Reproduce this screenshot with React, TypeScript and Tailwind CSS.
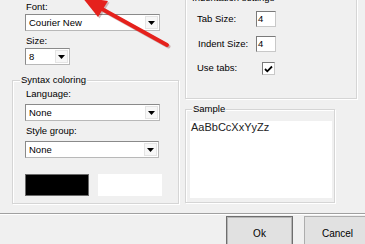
import React from "react";

function Combo({ value, w }: { value: string; w: string }) {
  return (
    <div className={`${w} h-[17px] flex items-stretch bg-white border border-t-[#8a8a8a] border-l-[#8a8a8a] border-r-[#b8b8b8] border-b-[#b8b8b8]`}>
      <div className="flex-1 pl-[3px] leading-[15px] truncate">{value}</div>
      <div className="w-[13px] my-[1px] mr-[1px] flex items-center justify-center bg-[#f7f7f7] border border-[#e4e4e4]">
        <svg width="7" height="4" viewBox="0 0 7 4">
          <path d="M0 0H7L3.5 4Z" fill="#000" />
        </svg>
      </div>
    </div>
  );
}

function NumBox({ value }: { value: string }) {
  return (
    <div className="w-[20px] h-[16px] bg-white border border-t-[#7a7a7a] border-l-[#7a7a7a] border-r-[#c8c8c8] border-b-[#c8c8c8] pl-[1px] leading-[14px]">
      {value}
    </div>
  );
}

export default function App() {
  return (
    <div className="relative w-[365px] h-[244px] overflow-hidden bg-[#f0f0f0] text-[9.5px] text-black font-['Liberation_Sans',Arial,sans-serif]">
      <div className="flex h-[213px]">
        {/* Left column */}
        <div className="w-[185px] shrink-0">
          <div className="pl-[26px] pt-[1px] leading-[12px] h-[13px]">Font:</div>
          <div className="ml-[25px] mt-[1px]">
            <Combo value="Courier New" w="w-[135px]" />
          </div>
          <div className="pl-[26px] mt-[4px] leading-[12px] h-[12px]">Size:</div>
          <div className="ml-[25px] mt-[1px]">
            <Combo value="8" w="w-[45px]" />
          </div>

          <div className="relative ml-[12px] mt-[15px] w-[167px] h-[124px] border border-[#d5d5d5] shadow-[inset_1px_1px_0_#ffffff,1px_1px_0_#ffffff]">
            <span className="absolute left-[7px] top-[-7px] px-[1px] leading-[12px] bg-[#f0f0f0]">Syntax coloring</span>
            <div className="pl-[12px] pt-[7px]">
              <div className="pl-[1px] leading-[12px] h-[12px]">Language:</div>
              <div className="mt-[4px]">
                <Combo value="None" w="w-[135px]" />
              </div>
              <div className="pl-[1px] mt-[4px] leading-[12px] h-[12px]">Style group:</div>
              <div className="mt-[4px]">
                <Combo value="None" w="w-[134px]" />
              </div>
              <div className="mt-[16px] flex gap-[9px]">
                <div className="w-[64px] h-[22px] bg-black border border-[#6a6a6a]" />
                <div className="w-[64px] h-[22px] bg-white" />
              </div>
            </div>
          </div>
        </div>

        {/* Right column */}
        <div className="flex-1">
          <div className="relative mt-[-2px] w-[172px] h-[101px] border border-[#d5d5d5] shadow-[inset_1px_1px_0_#ffffff,1px_1px_0_#ffffff]">
            <span className="absolute left-[5px] top-[-7px] px-[1px] leading-[12px] bg-[#f0f0f0]">Indentation settings</span>
            <div className="pl-[11px] pt-[12px]">
              <div className="flex items-center h-[16px]">
                <div className="w-[59px]">Tab Size:</div>
                <NumBox value="4" />
              </div>
              <div className="flex items-center h-[16px] mt-[9px]">
                <div className="w-[59px] pl-[1px]">Indent Size:</div>
                <NumBox value="4" />
              </div>
              <div className="flex items-center h-[13px] mt-[10px]">
                <div className="w-[65px]">Use tabs:</div>
                <div className="w-[13px] h-[13px] bg-white border border-t-[#7a7a7a] border-l-[#7a7a7a] border-r-[#c8c8c8] border-b-[#c8c8c8] flex items-center justify-center">
                  <svg width="9" height="8" viewBox="0 0 9 8">
                    <path d="M1 4L3.3 6.3L8 1.5" stroke="#000" strokeWidth="1.8" fill="none" />
                  </svg>
                </div>
              </div>
            </div>
          </div>

          <div className="relative mt-[10px] w-[150px] h-[94px] border border-[#d5d5d5] shadow-[inset_1px_1px_0_#ffffff,1px_1px_0_#ffffff]">
            <span className="absolute left-[6px] top-[-7px] px-[1px] leading-[12px] bg-[#f0f0f0]">Sample</span>
            <div className="ml-[4px] mr-[2px] mt-[11px] h-[77px] bg-white px-[1px] text-[11px] leading-[13px] text-[#222]">
              AaBbCcXxYyZz
            </div>
          </div>
        </div>
      </div>

      {/* separator */}
      <div className="h-[1px] bg-[#a0a0a0]" />
      <div className="h-[1px] bg-white" />

      {/* buttons */}
      <div className="flex gap-[11px] pl-[226px] pt-[1px]">
        <div className="w-[67px] h-[34px] shrink-0 bg-[#e1e1e1] border border-[#6e6e6e] shadow-[inset_0_0_0_1px_#b5b5b5] flex items-center justify-center text-[10px]">
          Ok
        </div>
        <div className="w-[67px] h-[34px] shrink-0 bg-[#e1e1e1] border border-[#adadad] flex items-center justify-center text-[10px]">
          Cancel
        </div>
      </div>

      {/* red annotation arrow */}
      <svg className="absolute left-0 top-0 pointer-events-none" width="365" height="244" viewBox="0 0 365 244">
        <g opacity="0.25" transform="translate(1.5,1.5)">
          <line x1="167" y1="45" x2="102" y2="9" stroke="#600" strokeWidth="4" strokeLinecap="round" />
          <polygon points="82,-3 108,1 98,17" fill="#600" />
        </g>
        <line x1="167" y1="45" x2="102" y2="9" stroke="#e5211c" strokeWidth="4" strokeLinecap="round" />
        <polygon points="82,-3 108,1 98,17" fill="#e5211c" />
      </svg>
    </div>
  );
}
